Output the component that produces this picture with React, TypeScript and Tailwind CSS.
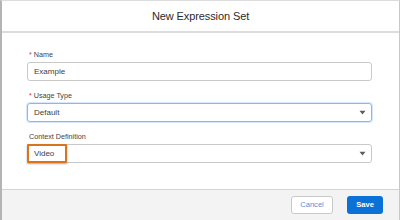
import React from 'react';

const Caret: React.FC = () => (
  <svg width="7" height="5" viewBox="0 0 7 5" className="shrink-0">
    <path d="M0.5 0.8 L6.5 0.8 L3.5 4.4 Z" fill="#5c5c5c" />
  </svg>
);

const Label: React.FC<{ text: string; required?: boolean }> = ({ text, required }) => (
  <div className="h-[10px] leading-[10px] text-[7.2px] text-[#444444] pl-[2px] flex items-center">
    {required && <span className="text-[#c23934] mr-[2px] text-[7px]">*</span>}
    <span>{text}</span>
  </div>
);

const App: React.FC = () => {
  return (
    <div className="w-[400px] h-[220px] bg-white border-l-2 border-r border-t border-l-[#b4b4b4] border-r-[#c8c8c8] border-t-[#dcdcdc] flex flex-col font-['Liberation_Sans',Arial,sans-serif] overflow-hidden">
      {/* header */}
      <div className="h-[32px] shrink-0 border-b-2 border-[#dcdcdc] flex items-center justify-center">
        <h2 className="text-[11px] text-[#2b2b2b] tracking-[-0.1px]">New Expression Set</h2>
      </div>

      {/* body */}
      <div className="flex-1 pl-[25px] pr-[27px] pt-[17px] flex flex-col">
        <div>
          <Label text="Name" required />
          <div className="mt-[2px] h-[19px] rounded-[3px] border border-[#c9c9c9] flex items-center px-[6px] text-[8px] text-[#3e3e3c]">
            Example
          </div>
        </div>

        <div className="mt-[10px]">
          <Label text="Usage Type" required />
          <div className="mt-[2px] h-[19px] rounded-[3px] border border-[#8ab6f2] shadow-[0_0_0_1px_#d6e6fb] flex items-center justify-between pl-[6px] pr-[5px] text-[8px] text-[#3e3e3c]">
            <span>Default</span>
            <Caret />
          </div>
        </div>

        <div className="mt-[10px]">
          <Label text="Context Definition" />
          <div className="relative mt-[2px] h-[19px] rounded-[3px] border border-[#c9c9c9] flex items-center justify-between pl-[6px] pr-[5px] text-[8px] text-[#3e3e3c]">
            <span>Video</span>
            <Caret />
            <div className="absolute left-[-1px] top-[-1px] w-[40px] h-[19px] border-2 border-[#d9731c] shadow-[0_1px_2px_rgba(0,0,0,0.35)] rounded-[1px]" />
          </div>
        </div>
      </div>

      {/* footer */}
      <div className="h-[31px] shrink-0 bg-[#f3f3f3] border-t border-[#d4d4d4] flex items-center justify-end gap-[14px] pr-[16px]">
        <button className="w-[42px] h-[18px] rounded-[3px] border border-[#c9c9c9] bg-white text-[7.6px] text-[#5a8fd6]">
          Cancel
        </button>
        <button className="w-[36px] h-[18px] rounded-[3px] bg-[#0b71d6] text-[7.6px] font-bold text-white">
          Save
        </button>
      </div>
    </div>
  );
};

export default App;
